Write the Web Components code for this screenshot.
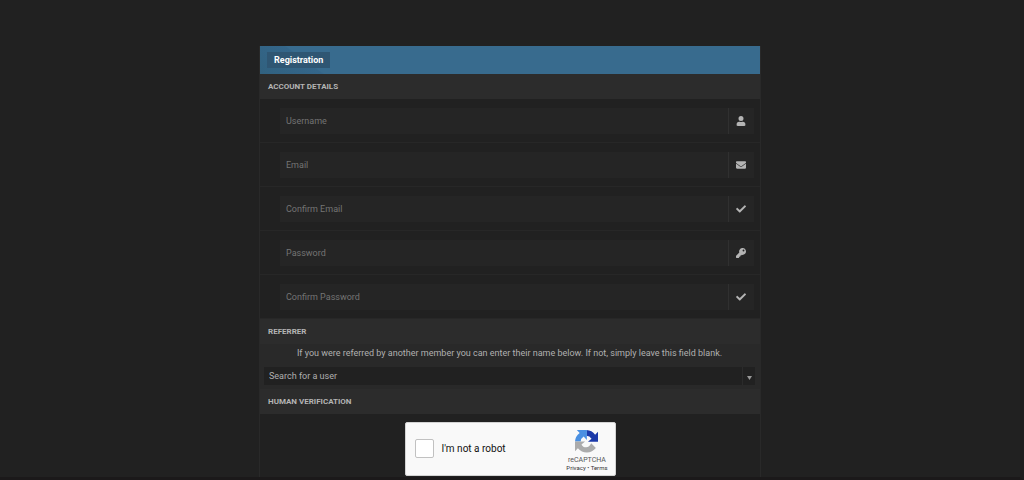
<!DOCTYPE html>
<html lang="en">
<head>
<meta charset="utf-8">
<title>Registration</title>
<style>
html{height:100%;background:#212121}
body{margin:0;min-height:100%;display:flex;box-sizing:border-box;background:#212121;color:#b0b0b0;font:9px/14px Roboto,"Liberation Sans",sans-serif;border-right:4px solid #1d1d1e;border-bottom:3px solid #1b191a}
</style>
</head>
<body>
<registration-page></registration-page>
<script>
const icons={
user:'<path d="M224 256a128 128 0 1 0 0-256 128 128 0 0 0 0 256zm90 32h-17a174 174 0 0 1-146 0h-17A134 134 0 0 0 0 422v42c0 27 21 48 48 48h352c27 0 48-21 48-48v-42a134 134 0 0 0-134-134z" transform="translate(32)"/>',
mail:'<path d="M502 191c4-3 10 0 10 5v204c0 27-21 48-48 48H48c-27 0-48-21-48-48V196c0-5 6-8 10-5 22 17 52 40 155 114 21 16 57 48 91 48s71-33 91-48c103-74 133-97 155-114zM256 320c23 0 57-29 74-42 132-96 142-104 173-128 6-5 9-12 9-19v-19c0-27-21-48-48-48H48c-27 0-48 21-48 48v19c0 7 3 14 9 19 31 24 41 32 173 128 17 13 51 42 74 42z"/>',
check:'<path d="M174 439 8 273a26 26 0 0 1 0-36l36-36c10-10 26-10 36 0l112 111L432 72c10-10 26-10 36 0l36 36c10 10 10 26 0 36L210 439c-10 10-26 10-36 0z"/>',
key:'<path d="M512 176a176 176 0 0 1-209 173l-24 27c-5 5-11 8-18 8h-37v40c0 13-11 24-24 24h-40v40c0 13-11 24-24 24H24c-13 0-24-11-24-24v-78c0-6 3-12 7-17l162-162A176 176 0 1 1 512 176zm-176-48a48 48 0 1 0 96 0 48 48 0 0 0-96 0z"/>'
};
function define(name,render){
  customElements.define(name,class extends HTMLElement{
    connectedCallback(){
      if(!this.shadowRoot)this.attachShadow({mode:'open'}).innerHTML=render(this);
    }
  });
}
define('section-heading',()=>`
<style>
:host{display:block;background:#2c2c2c}
h2{margin:0;padding:6px 8px 5px;font:bold 8px/14px Roboto,sans-serif;text-transform:uppercase;color:#b4b4b4}
</style><h2><slot></slot></h2>`);
define('form-field',el=>{
  const label=el.getAttribute('label');
  return `
<style>
:host{display:block;padding:9px 6px 8px 20px;border-bottom:1px solid #272727}
.box{display:flex;height:26px;background:#252525}
input{flex:1;min-width:0;border:0;outline:0;margin:0;padding:0 6px;background:none;color:#bbb;font:9px/14px Roboto,sans-serif}
input::placeholder{color:#747474;opacity:1}
span{display:flex;align-items:center;justify-content:center;box-sizing:border-box;width:26px;padding-right:1px;border-left:1px solid #303030}
svg{width:10px;height:10px;fill:#b4b4b4}
</style>
<div class="box"><input type="${el.getAttribute('type')}" aria-label="${label}" placeholder="${label}"><span><svg viewBox="0 0 512 512" aria-hidden="true">${icons[el.getAttribute('icon')]}</svg></span></div>`;
});
define('user-search',()=>`
<style>
:host{display:block;background:#292929;padding:2px 5px 4px 4px}
p{margin:0 0 7px;text-align:center;color:#b0b0b0}
.box{position:relative;height:18px;background:#212121}
select{appearance:none;box-sizing:border-box;display:block;width:100%;height:18px;margin:0;border:0;padding:0 18px 0 5px;background:none;color:#b0b0b0;font:9px/14px Roboto,sans-serif}
svg{position:absolute;right:0;top:0;width:13px;height:18px;border-left:1px solid #2b2b2b;box-sizing:border-box;pointer-events:none}
</style>
<p><slot></slot></p>
<div class="box"><select aria-label="Search for a user"><option>Search for a user</option></select><svg viewBox="0 0 12 18" aria-hidden="true"><path d="M4 9h5l-2.500 4z" fill="#999"/></svg></div>`);
define('captcha-box',()=>`
<style>
:host{display:flex;box-sizing:border-box;align-items:center;width:211px;height:54px;margin:8px auto 1px;padding:0 7px 0 9px;background:#f9f9f9;border:1px solid #d3d3d3;border-radius:2px;color:#111}
label{display:flex;align-items:center;gap:8px;font:10px/14px Roboto,sans-serif;flex:1;padding-bottom:1px}
input{appearance:none;box-sizing:border-box;width:19px;height:19px;margin:0;background:#fff;border:1px solid #c1c1c1;border-radius:2px}
.brand{display:flex;flex-direction:column;align-items:center;font:7px/8px Roboto,sans-serif;color:#555;padding-top:4px}
.brand svg{width:23px;height:23px;margin-bottom:3px}
nav{font-size:6px;white-space:nowrap;color:#333}
a{color:inherit;text-decoration:none}
</style>
<label><input type="checkbox">I'm not a robot</label>
<div class="brand">
<svg viewBox="0 0 64 64" aria-hidden="true"><path fill="#1c3aa9" d="M64 32V5l-8 8A32 32 0 0 0 32 0v16q9 0 14 8l-10 9h28z"/><path fill="#4a90e2" d="M32 0H5l8 8A32 32 0 0 0 0 32h16q0-9 8-14l9 10V0z"/><path fill="#ababab" d="M0 32v27l8-8a32 32 0 0 0 50-1L45 37q-5 11-14 11-9 0-13-8l10-8z"/></svg>
<span>reCAPTCHA</span><nav><a href="#privacy">Privacy</a> • <a href="#terms">Terms</a></nav>
</div>`);
define('registration-page',()=>`
<style>
:host{display:flex;flex:1;padding:46px 8px 0;justify-content:center}
form{box-sizing:border-box;width:100%;max-width:502px;border:solid #292929;border-width:0 1px}
header{display:flex;align-items:center;height:28px;padding:0 7px;background:linear-gradient(36deg,#31617f,#34668a 37px,#386b8e 38px)}
h1{margin:0;padding:1px 7px;background:#2f5673;color:#fff;font:bold 9px/14px Roboto,sans-serif}
</style>
<form>
<header><h1>Registration</h1></header>
<section-heading>Account details</section-heading>
<form-field label="Username" type="text" icon="user"></form-field>
<form-field label="Email" type="email" icon="mail"></form-field>
<form-field label="Confirm Email" type="email" icon="check"></form-field>
<form-field label="Password" type="password" icon="key"></form-field>
<form-field label="Confirm Password" type="password" icon="check"></form-field>
<section-heading>Referrer</section-heading>
<user-search>If you were referred by another member you can enter their name below. If not, simply leave this field blank.</user-search>
<section-heading>Human verification</section-heading>
<captcha-box></captcha-box>
</form>`);
</script>
</body>
</html>
